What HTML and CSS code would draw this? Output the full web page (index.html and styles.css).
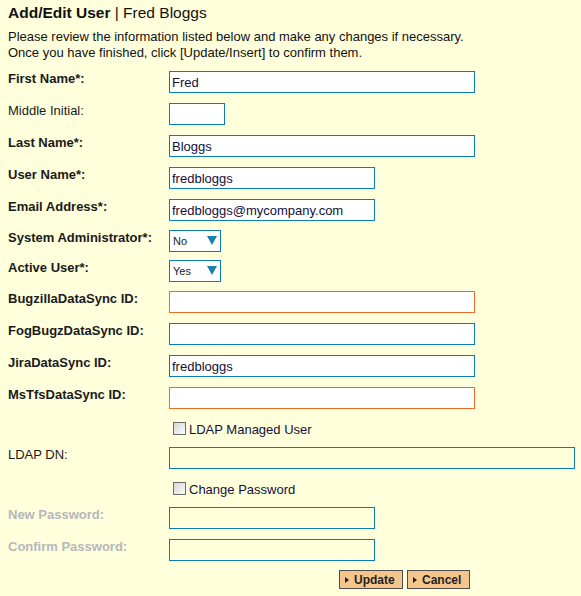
FILE: index.html
```html
<!DOCTYPE html>
<html>
<head>
<meta charset="utf-8">
<link rel="stylesheet" href="styles.css">
</head>
<body>
<h1 class="title"><b>Add/Edit User</b> | Fred Bloggs</h1>
<p class="intro">Please review the information listed below and make any changes if necessary.<br>Once you have finished, click [Update/Insert] to confirm them.</p>
<form class="form">
  <div class="row"><label class="lbl req">First Name*:</label><input class="txt wide" value="Fred"></div>
  <div class="row"><label class="lbl">Middle Initial:</label><input class="txt tiny" value=""></div>
  <div class="row"><label class="lbl req">Last Name*:</label><input class="txt wide" value="Bloggs"></div>
  <div class="row"><label class="lbl req">User Name*:</label><input class="txt mid" value="fredbloggs"></div>
  <div class="row"><label class="lbl req">Email Address*:</label><input class="txt mid" value="fredbloggs@mycompany.com"></div>
  <div class="row row-sel"><label class="lbl req">System Administrator*:</label><div class="sel"><select><option>No</option><option>Yes</option></select></div></div>
  <div class="row row-sel2"><label class="lbl req">Active User*:</label><div class="sel"><select><option>Yes</option><option>No</option></select></div></div>
  <div class="row row-sel"><label class="lbl req">BugzillaDataSync ID:</label><input class="txt wide warn" value=""></div>
  <div class="row"><label class="lbl req">FogBugzDataSync ID:</label><input class="txt wide" value=""></div>
  <div class="row"><label class="lbl req">JiraDataSync ID:</label><input class="txt wide" value="fredbloggs"></div>
  <div class="row"><label class="lbl req">MsTfsDataSync ID:</label><input class="txt wide warn" value=""></div>
  <div class="row row-check"><span class="lbl"></span><label class="check"><input type="checkbox" class="box">LDAP Managed User</label></div>
  <div class="row"><label class="lbl">LDAP DN:</label><input class="txt full plain" value=""></div>
  <div class="row row-check"><span class="lbl"></span><label class="check"><input type="checkbox" class="box">Change Password</label></div>
  <div class="row"><label class="lbl req off">New Password:</label><input class="txt mid plain" type="password" value=""></div>
  <div class="row"><label class="lbl req off">Confirm Password:</label><input class="txt mid plain" type="password" value=""></div>
  <div class="row row-btn"><span class="lbl"></span><div class="actions"><button type="button" class="btn"><span class="tri"></span>Update</button><button type="button" class="btn"><span class="tri"></span>Cancel</button></div></div>
</form>
</body>
</html>
```
FILE: styles.css
```css
html, body {
  margin: 0;
  padding: 0;
  background: #ffffdc;
}
body {
  padding: 0 0 0 8px;
  font-family: "Liberation Sans", Arial, sans-serif;
  color: #111;
}
.title {
  margin: 4px 0 0;
  font-size: 15.5px;
  line-height: 18px;
  font-weight: normal;
  color: #111;
}
.title b {
  font-weight: bold;
}
.intro {
  margin: 7px 0 0;
  font-size: 13px;
  line-height: 16px;
  color: #111;
}
.form {
  margin: 0;
  padding-bottom: 8px;
}
.row {
  display: flex;
  align-items: flex-start;
  margin-top: 10px;
}
.row-sel {
  margin-top: 9px;
}
.row-sel2 {
  margin-top: 8px;
}
.row-check {
  margin-top: 13px;
}
.row-btn {
  margin-top: 9px;
}
.lbl {
  flex: 0 0 161px;
  font-size: 13px;
  line-height: 15px;
  color: #1a1a1a;
}
.req {
  font-weight: bold;
}
.off {
  color: #b6b6be;
}
.txt {
  flex: none;
  box-sizing: border-box;
  height: 22px;
  margin: 0;
  padding: 0 2px;
  border: 1px solid #0a7eb0;
  background: #fff;
  font-family: "Liberation Sans", Arial, sans-serif;
  font-size: 13px;
  color: #12103a;
  outline: none;
}
.plain {
  background: transparent;
}
.wide {
  width: 306px;
}
.mid {
  width: 206px;
}
.tiny {
  width: 56px;
}
.full {
  width: 406px;
}
.warn {
  border-color: #f06a22;
}
.sel {
  position: relative;
  flex: none;
  width: 52px;
  height: 22px;
}
.sel select {
  appearance: none;
  -webkit-appearance: none;
  box-sizing: border-box;
  width: 52px;
  height: 22px;
  margin: 0;
  padding: 0 0 0 3px;
  border: 1px solid #0a7eb0;
  border-radius: 0;
  background: #fff;
  font-family: "Liberation Sans", Arial, sans-serif;
  font-size: 11px;
  color: #222;
  outline: none;
}
.sel::after {
  content: "";
  position: absolute;
  left: 38px;
  top: 6px;
  width: 0;
  height: 0;
  border-left: 5px solid transparent;
  border-right: 5px solid transparent;
  border-top: 9px solid #1a7fab;
  pointer-events: none;
}
.check {
  display: flex;
  align-items: flex-start;
  font-size: 13px;
  line-height: 15px;
  color: #14103a;
}
.box {
  flex: none;
  appearance: none;
  -webkit-appearance: none;
  box-sizing: border-box;
  width: 13px;
  height: 13px;
  margin: 0 3px 0 4px;
  border: 1px solid #6a6a6a;
  border-radius: 0;
  background: linear-gradient(135deg, #d6d6d6, #fbfbfb);
}
.actions {
  display: flex;
  gap: 4px;
  margin-left: 170px;
}
.btn {
  box-sizing: border-box;
  display: flex;
  align-items: center;
  height: 19px;
  margin: 0;
  padding: 0 0 0 5px;
  border: 1px solid #4d4d4d;
  border-radius: 0;
  background: #f4c68c;
  font-family: "Liberation Sans", Arial, sans-serif;
  font-size: 12px;
  font-weight: bold;
  color: #1f1f1f;
  cursor: pointer;
}
.btn:first-child {
  width: 64px;
}
.btn:last-child {
  width: 63px;
}
.tri {
  display: inline-block;
  width: 0;
  height: 0;
  margin-right: 5px;
  border-top: 3px solid transparent;
  border-bottom: 3px solid transparent;
  border-left: 4px solid #222;
}
```
